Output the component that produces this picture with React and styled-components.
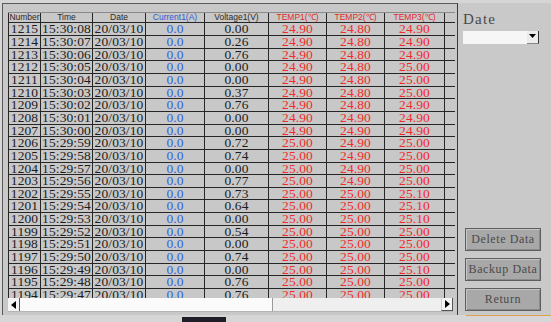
import React from 'react'
import styled, { createGlobalStyle } from 'styled-components'

const GlobalStyle = createGlobalStyle`
  html, body {
    margin: 0;
    padding: 0;
    background: #d6d6d6;
    overflow: hidden;
  }
`

const COLS = '32px 52px 53px 59px 64px 58px 58px 60px 30px'
const SERIF = "'Liberation Serif', 'Times New Roman', serif"

const rows = [
  ['1215', '15:30:08', '0.00', '24.90', '24.80', '24.90'],
  ['1214', '15:30:07', '0.26', '24.90', '24.80', '24.90'],
  ['1213', '15:30:06', '0.76', '24.90', '24.80', '24.90'],
  ['1212', '15:30:05', '0.00', '24.90', '24.80', '25.00'],
  ['1211', '15:30:04', '0.00', '24.90', '24.80', '25.00'],
  ['1210', '15:30:03', '0.37', '24.90', '24.80', '25.00'],
  ['1209', '15:30:02', '0.76', '24.90', '24.80', '24.90'],
  ['1208', '15:30:01', '0.00', '24.90', '24.90', '24.90'],
  ['1207', '15:30:00', '0.00', '24.90', '24.90', '24.90'],
  ['1206', '15:29:59', '0.72', '25.00', '24.90', '25.00'],
  ['1205', '15:29:58', '0.74', '25.00', '24.90', '25.00'],
  ['1204', '15:29:57', '0.00', '25.00', '24.90', '25.00'],
  ['1203', '15:29:56', '0.77', '25.00', '24.90', '25.00'],
  ['1202', '15:29:55', '0.73', '25.00', '25.00', '25.10'],
  ['1201', '15:29:54', '0.64', '25.00', '25.00', '25.10'],
  ['1200', '15:29:53', '0.00', '25.00', '25.00', '25.10'],
  ['1199', '15:29:52', '0.54', '25.00', '25.00', '25.00'],
  ['1198', '15:29:51', '0.00', '25.00', '25.00', '25.00'],
  ['1197', '15:29:50', '0.74', '25.00', '25.00', '25.00'],
  ['1196', '15:29:49', '0.00', '25.00', '25.00', '25.10'],
  ['1195', '15:29:48', '0.76', '25.00', '25.00', '25.00'],
  ['1194', '15:29:47', '0.76', '25.00', '25.00', '25.00']
]

const Screen = styled.div`
  width: 551px;
  height: 322px;
  display: flex;
  flex-direction: column;
`

const Main = styled.div`
  display: flex;
  padding: 3px 0 0 2px;
  height: 312px;
`

const LeftPanel = styled.div`
  width: 456px;
  background: #c8c8c8;
  border-top: 1px solid #5a5a5a;
  border-left: 1px solid #5a5a5a;
  border-right: 1px solid #3a3a3a;
  padding: 8px 0 0 5px;
  box-sizing: border-box;
  display: flex;
  flex-direction: column;
`

const Viewport = styled.div`
  width: 447px;
  height: 286px;
  overflow: hidden;
`

const Row = styled.div`
  display: grid;
  grid-template-columns: ${COLS};
  height: ${p => (p.$head ? '11.3px' : '12.67px')};
  border-bottom: 1px solid #262626;
  box-sizing: border-box;
  border-top: ${p => (p.$head ? '1px solid #8a8a8a' : 'none')};
`

const Cell = styled.div`
  border-left: 1px solid #262626;
  text-align: center;
  white-space: nowrap;
  color: ${p => p.$color || '#1c1c1c'};
  font-family: ${SERIF};
  font-size: 13.5px;
  letter-spacing: 0.1px;
  line-height: 11.6px;
`

const HeadCell = styled(Cell)`
  font-family: 'Liberation Sans', Arial, sans-serif;
  font-size: 8.5px;
  letter-spacing: 0;
  line-height: 9.3px;
  color: ${p => p.$color || '#2a2a2a'};
`

const ScrollBar = styled.div`
  width: 445px;
  height: 13px;
  display: flex;
  background: #efefef;
  border-bottom: 1px solid #b4b4b4;
`

const ArrowBtn = styled.div`
  width: 12px;
  height: 13px;
  display: flex;
  align-items: center;
  justify-content: center;
  background: #f4f4f4;
  box-sizing: border-box;
  border-left: ${p => (p.$right ? '1px solid #cfcfcf' : 'none')};
  border-right: 1px solid #555;
  border-bottom: ${p => (p.$right ? '1px solid #555' : 'none')};
`

const Thumb = styled.div`
  width: 252px;
  background: #fbfbfb;
  border-right: 1px solid #9a9a9a;
`

const Track = styled.div`
  flex: 1;
`

const RightPanel = styled.div`
  flex: 1;
  background: #c9c9c9;
  padding: 8px 10px 4px 5px;
  display: flex;
  flex-direction: column;
`

const Label = styled.div`
  font-family: ${SERIF};
  font-size: 15px;
  letter-spacing: 1.2px;
  color: #4a4a4a;
  line-height: 16px;
`

const Select = styled.div`
  margin-top: 4px;
  width: 76px;
  height: 13px;
  background: #f6f6f6;
  display: flex;
  justify-content: flex-end;
`

const SelectArrow = styled.div`
  width: 12px;
  height: 13px;
  box-sizing: border-box;
  background: #ececec;
  border-right: 1px solid #333;
  border-bottom: 1px solid #888;
  display: flex;
  align-items: center;
  justify-content: center;
`

const Buttons = styled.div`
  margin-top: auto;
  display: flex;
  flex-direction: column;
  gap: 7px;
  padding-left: 2px;
`

const Button = styled.div`
  width: 76px;
  height: 23px;
  box-sizing: border-box;
  background: #a8a8a8;
  border: 1px solid #5e5e5e;
  box-shadow: inset 1px 1px 0 #c4c4c4, inset -1px -1px 0 #8a8a8a;
  display: flex;
  align-items: center;
  justify-content: center;
  font-family: ${SERIF};
  font-size: 12px;
  letter-spacing: 0.6px;
  color: #4a4a4a;
`

const Footer = styled.div`
  flex: 1;
  display: flex;
`

const FooterLeft = styled.div`
  width: 458px;
  display: flex;
  align-items: flex-end;
  padding-left: 182px;
`

const TaskStrip = styled.div`
  width: ${p => p.$w}px;
  height: 5px;
  background: #1e1e28;
`

const FooterRight = styled.div`
  flex: 1;
  display: flex;
  flex-direction: column;
`

const OrangeLine = styled.div`
  width: 85px;
  height: 1px;
  background: #e0a050;
  margin-left: 2px;
`

const Tri = ({ dir }) => {
  const pts = {
    left: '6,0 6,8 1,4',
    right: '1,0 1,8 6,4',
    down: '0,1 7,1 3.5,5'
  }
  return (
    <svg width="7" height="8" viewBox="0 0 7 8">
      <polygon points={pts[dir]} fill="#000" />
    </svg>
  )
}

const headers = [
  ['Number'],
  ['Time'],
  ['Date'],
  ['Current1(A)', '#2d5bd8'],
  ['Voltage1(V)'],
  ['TEMP1(\u2103)', '#e02a2a'],
  ['TEMP2(\u2103)', '#e02a2a'],
  ['TEMP3(\u2103)', '#e02a2a'],
  ['']
]

const RED = '#f22b2b'
const BLUE = '#2f63e6'

const App = () => {
  return (
    <Screen>
      <GlobalStyle />
      <Main>
        <LeftPanel>
          <Viewport>
            <Row $head>
              {headers.map(([t, c], i) => (
                <HeadCell key={i} $color={c}>{t}</HeadCell>
              ))}
            </Row>
            {rows.map(r => (
              <Row key={r[0]}>
                <Cell>{r[0]}</Cell>
                <Cell>{r[1]}</Cell>
                <Cell>20/03/10</Cell>
                <Cell $color={BLUE}>0.0</Cell>
                <Cell>{r[2]}</Cell>
                <Cell $color={RED}>{r[3]}</Cell>
                <Cell $color={RED}>{r[4]}</Cell>
                <Cell $color={RED}>{r[5]}</Cell>
                <Cell />
              </Row>
            ))}
          </Viewport>
          <ScrollBar>
            <ArrowBtn><Tri dir="left" /></ArrowBtn>
            <Thumb />
            <Track />
            <ArrowBtn $right><Tri dir="right" /></ArrowBtn>
          </ScrollBar>
        </LeftPanel>
        <RightPanel>
          <Label>Date</Label>
          <Select>
            <SelectArrow><Tri dir="down" /></SelectArrow>
          </Select>
          <Buttons>
            <Button>Delete Data</Button>
            <Button>Backup Data</Button>
            <Button>Return</Button>
          </Buttons>
        </RightPanel>
      </Main>
      <Footer>
        <FooterLeft>
          <TaskStrip $w={44} />
        </FooterLeft>
        <FooterRight>
          <OrangeLine />
        </FooterRight>
      </Footer>
    </Screen>
  )
}

export default App
